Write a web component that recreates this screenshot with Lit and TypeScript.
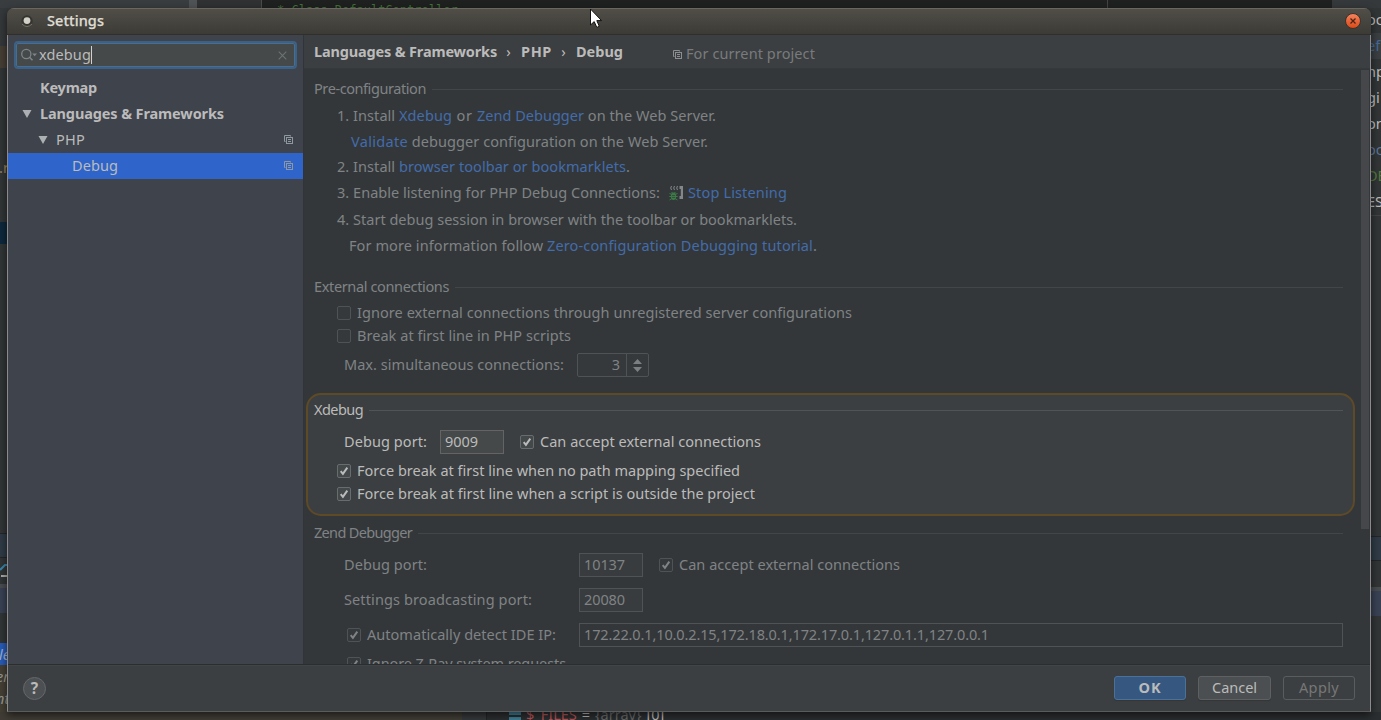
import { LitElement, html, css, nothing } from "lit";
import { customElement, property, state } from "lit/decorators.js";
import { styleMap } from "lit/directives/style-map.js";
import { classMap } from "lit/directives/class-map.js";

/** A run of text whose tracking is adjusted so that it fills a given width. */
@customElement("ui-text")
class UiText extends LitElement {
  static styles = css`
    :host { display: inline-block; white-space: pre; flex: none; padding-bottom: 2px; }
    .run { display: inline-block; }
  `;
  @property({ type: String }) text = "";
  @property({ type: Number }) width = 0;
  @state() private spacing = 0;

  firstUpdated() {
    const run = this.renderRoot.querySelector(".run") as HTMLElement;
    const natural = run.getBoundingClientRect().width;
    if (this.width && this.text.length) this.spacing = (this.width - natural) / this.text.length;
  }
  render() {
    return html`<span class="run" style=${styleMap({ letterSpacing: `${this.spacing}px` })}>${this.text}</span>`;
  }
}

const t = (text: string, width: number, cls = "") =>
  html`<ui-text class=${cls} .text=${text} .width=${width}></ui-text>`;

@customElement("ui-check")
class UiCheck extends LitElement {
  static styles = css`
    :host { display: flex; align-items: center; }
    .box {
      box-sizing: border-box; width: 14px; height: 14px; margin-right: 6px; flex: none;
      border: 1px solid var(--box-line, #505355); border-radius: 2px; background: var(--box-fill, #35393b);
    }
    .box svg { display: block; }
  `;
  @property({ type: Boolean }) checked = false;
  render() {
    return html`<span class="box">${this.checked
      ? html`<svg width="12" height="12" viewBox="0 0 12 12"><path d="M2.7 6.2L4.9 8.8L9.3 2.6" fill="none" stroke="currentColor" stroke-width="2"/></svg>`
      : nothing}</span><slot></slot>`;
  }
}

const copyIcon = html`<svg width="11" height="11" viewBox="0 0 11 11" fill="none" stroke="currentColor">
  <path d="M2.5 7.5H1.5V1.5H7.5V2.5"/><rect x="3.5" y="3.5" width="6" height="6"/><path d="M5 5.5H8M5 7.5H8"/>
</svg>`;

const arrow = html`<svg width="10" height="8" viewBox="0 0 10 8"><path d="M0.5 0H9.5L5 8Z" fill="#adb0b2"/></svg>`;

const listenIcon = html`<svg width="15" height="16" viewBox="0 0 15 16" fill="none">
  <path d="M2.5 1Q0.9 3 2.5 5M5.5 1Q3.9 3 5.5 5M8.5 1Q6.9 3 8.5 5" stroke="#85898b"/>
  <path d="M10.5 1H14V14H10.5V11H11.8V4H10.5Z" fill="#83878a"/>
  <ellipse cx="4.5" cy="11.3" rx="2.6" ry="3.7" fill="#3d7a47"/>
  <path d="M0.5 8.5L3 9.5M8.5 8.5L6 9.5M0.3 11.5H8.7M0.5 15L3 13.5M8.5 15L6 13.5M2.5 7L4 8.5M6.5 7L5 8.5" stroke="#3d7a47"/>
  <path d="M3 10.5H6M3 12.5H6" stroke="#2c4234" stroke-width=".7"/>
</svg>`;

@customElement("app-root")
class AppRoot extends LitElement {
  static styles = css`
    :host {
      display: block; position: relative; width: 1381px; height: 720px; overflow: hidden;
      background: #323536; color: #bbbbbb; font: 14.5px/20px "Noto Sans", "Open Sans", sans-serif;
    }
    .desk { display: flex; flex-direction: column; height: 720px; }
    .top { display: flex; height: 8px; overflow: hidden; font: 12px/16px "DejaVu Sans Mono", monospace; color: #457038; }
    .t1 { width: 189px; background: #3a3d3f; }
    .t2 { width: 8px; background: #505355; }
    .t3 { width: 64px; background: #2f3133; border-right: 1px solid #4b4b4b; }
    .t4 { width: 830px; padding: 2px 0 0 15px; white-space: pre; background: #1f2120; }
    .t5 { width: 224px; border-left: 1px solid #444; background: #1f2120; }
    .t6 { flex: 1; background: #36393b; }
    .sides { flex: 1; display: flex; justify-content: space-between; min-height: 0; overflow: hidden; }
    .side { width: 12px; display: flex; flex-direction: column; overflow: hidden; white-space: pre; line-height: 24px; }
    .side span { flex: none; box-sizing: border-box; }
    .l1 { height: 38px; background: #35383a; } .l2 { height: 22px; background: #453f35; }
    .l3 { height: 154px; padding-top: 87px; color: #9c815f; text-indent: -1px; } .l4 { height: 22px; background: #0e283c; }
    .l5 { height: 289px; } .l6 { height: 24px; background: #2f3b47; border-top: 1px solid #242628; }
    .l7 { height: 27px; border-top: 1px solid #242628; }
    .l8 { height: 4px; background: #4a4d50; } .l9 { height: 25px; background: #394154; } .l10 { height: 30px; }
    .l11 { height: 22px; line-height: 22px; background: #285bb8; color: #9fb0cf; font-style: italic; text-indent: -1px; }
    .l12 { height: 22px; line-height: 22px; background: #444036; color: #9a9a92; font-style: italic; text-indent: -4px; }
    .l13 { height: 38px; }
    .r1 { height: 25px; line-height: 22px; } .r2 { height: 26px; background: #3b3f42; color: #446a98; }
    .r1, .r2, .r { text-indent: -2px; }
    .r { height: 26px; } .blue { color: #5a7596; } .green { color: #537940; }
    .r3 { height: 321px; border-top: 1px solid #444; }
    .bottom { display: flex; height: 8px; overflow: hidden; background: #2b2e30; }
    .b1 { width: 462px; background: #413d36; }
    .b2 { width: 24px; background: #35383a; border-right: 1px solid #232526; }
    .files { display: flex; height: 8px; padding-left: 22px; line-height: 4px; gap: 5px; }
    .bars { width: 12px; background: repeating-linear-gradient(#3f7f96 0 3px, #2b2e30 3px 5px); }
    .red { color: #b75557; } .grey { color: #686b6c; }

    .window {
      position: absolute; left: 7px; top: 8px; width: 1364px; height: 704px; box-sizing: border-box;
      display: flex; flex-direction: column; border-radius: 7px 7px 0 0; overflow: hidden;
      background: #3c3f41;
    }
    .shadow {
      position: absolute; left: 7px; top: 8px; width: 1364px; height: 704px; border-radius: 7px 7px 0 0;
      box-shadow: 0 3px 9px rgba(0, 0, 0, .6);
    }
    .titlebar {
      box-sizing: border-box; height: 27px; flex: none; display: flex; align-items: center; padding: 0 10px 0 14px;
      background: linear-gradient(#504e47, #3d3b36); border-top: 1px solid #69675f; border-bottom: 1px solid #302f2c;
      color: #dfdbd2; font-weight: 500;
    }
    .titlebar ui-text { margin-left: 14px; padding-bottom: 3px; flex: 1; -webkit-text-stroke: .25px #dfdbd2; }
    .titlebar svg { flex: none; margin-bottom: 1px; }
    .frame {
      flex: 1; min-height: 0; display: flex; flex-direction: column;
      border: solid #8b8b8b; border-width: 0 1px 1px; border-bottom-color: #5a5b5b;
    }
    .body { flex: 1; display: flex; min-height: 0; border-bottom: 1px solid #2b2d2e; }
    .sidebar { width: 295px; flex: none; background: #3f434c; border-right: 1px solid #313537; }
    .search {
      box-sizing: border-box; height: 28px; margin: 6px 6px 6px; padding: 0 8px 0 5px; display: flex; align-items: center;
      border: 2px solid #3d6185; outline: 1px solid #466d94; outline-offset: -3px; border-radius: 4px; background: #45494a;
    }
    .search ui-text { margin-left: 1px; }
    .caret { width: 1px; height: 18px; background: #d0d0d0; }
    .spring { flex: 1; }
    .node { height: 26px; display: flex; align-items: center; padding-right: 9px; }
    .node svg { flex: none; }
    .node .copy { margin: 0 0 1px auto; height: 11px; color: #8f979f; display: flex; }
    .bold { font-weight: 700; }
    .n0 { padding-left: 32px; } .n1 { padding-left: 14px; gap: 8px; } .n2 { padding-left: 30px; gap: 8px; } .n3 { padding-left: 64px; }
    .selected { background: #2f65ca; }
    .page { flex: 1; min-width: 0; display: flex; flex-direction: column; }
    .crumbs {
      height: 34px; box-sizing: border-box; flex: none; display: flex; align-items: center; padding-left: 10px;
      border-bottom: 1px solid #36393b; background: #3c3f41;
    }
    .scope { display: flex; align-items: center; gap: 3px; margin-left: 49px; padding-top: 5px; color: #787b7d; }
    .scope svg { color: #8b8f92; }
    .crumbs .sep { font-weight: 400; }
    .scroll { flex: 1; min-height: 0; display: flex; background: #33373a; }
    .content { flex: 1; min-width: 0; overflow: hidden; padding: 10px 6px 0 2px; color: #808385; }
    .bar { width: 8px; height: 459px; margin: 1px 1px 0 0; background: #46474a; }
    .head { display: flex; align-items: center; height: 20px; margin: 0 12px 0 8px; }
    .head::after { content: ""; flex: 1; height: 1px; margin-left: 6px; background: #434648; }
    .row { display: flex; align-items: center; padding-left: 31px; }
    .h23 { height: 23px; } .h24 { height: 24px; } .h25 { height: 25px; } .h26 { height: 26px; } .h28 { height: 28px; }
    .in45 { padding-left: 45px; } .in43 { padding-left: 43px; } .in38 { padding-left: 38px; } .in41 { padding-left: 41px; }
    .link { color: #436cab; }
    .steps { margin: 4px 0 18px; }
    .listen { display: flex; align-items: center; gap: 4px; margin-left: 9px; padding-bottom: 1px; }
    .ext { margin: 4px 0 6px; }
    .spinner {
      box-sizing: border-box; width: 72px; height: 24px; margin-left: 13px; display: flex;
      border: 1px solid #505355; border-radius: 2px; background: #35393b;
    }
    .value { width: 49px; box-sizing: border-box; padding-right: 6px; line-height: 21px; text-align: right; border-right: 1px solid #505355; }
    .spinner svg { margin: 5px 0 0 6px; }
    .card {
      box-sizing: border-box; height: 123px; margin: 16px 7px 7px 0; padding-top: 5px; width: 1049px;
      border: 2px solid #5f4a27; border-radius: 15px; background: #3c3f41; color: #bbbbbb;
      --box-line: #696c6d; --box-fill: #43494a;
    }
    .card .head { margin: 0 10px 10px 6px; }
    .card .head::after { background: #515456; }
    .card .row { padding-left: 29px; }
    .card .port { padding-left: 36px; margin-bottom: 5px; }
    .field {
      box-sizing: border-box; height: 24px; width: 64px; padding-left: 4px; display: flex; align-items: center;
      border: 1px solid #505355; background: #383c3e;
    }
    .card .field { border-color: #646464; background: #45494a; margin-left: 13px; }
    .port ui-check, .zport ui-check { margin-left: 16px; }
    .label { width: 235px; flex: none; }
    .auto .label { width: 232px; }
    .z { margin-bottom: 11px; }
    .auto { margin-bottom: 5px; }
    .field.wide { width: 764px; background: #33373a; }
    .zend { margin-bottom: 10px; }
    .footer { height: 46px; flex: none; display: flex; align-items: center; gap: 12px; padding: 0 15px 1px; border-top: 1px solid #424547; box-sizing: border-box; }
    .help {
      width: 23px; height: 23px; box-sizing: border-box; border: 1px solid #65686a; border-radius: 50%; background: #4c5052;
      margin-top: 1px; text-align: center; font-weight: 700; line-height: 21px; font-size: 15.5px;
    }
    .btn {
      width: 72px; height: 24px; box-sizing: border-box; border: 1px solid #5e6162; border-radius: 3px; background: #4b4f51;
      display: flex; align-items: center; justify-content: center; box-shadow: 0 1px 1px #333638;
    }
    .ok { border-color: #4a7199; background: #365880; font-weight: 700; }
    .cancel { width: 73px; }
    .apply { background: none; color: #777; box-shadow: none; border-color: #5a5d5e; }
    .pointer { position: absolute; left: 589px; top: 8px; }
  `;

  private node(level: string, text: string, width: number, opts: { arrow?: boolean; copy?: boolean; bold?: boolean; selected?: boolean }) {
    return html`<div class=${classMap({ node: true, [level]: true, selected: !!opts.selected, bold: !!opts.bold })}>
      ${opts.arrow ? arrow : nothing}${t(text, width)}${opts.copy ? html`<span class="copy">${copyIcon}</span>` : nothing}
    </div>`;
  }

  render() {
    return html`
      <div class="desk">
        <div class="top"><span class="t1"></span><span class="t2"></span><span class="t3"></span><span class="t4">* Class DefaultController</span><span class="t5"></span><span class="t6"></span></div>
        <div class="sides">
          <div class="side">
            <span class="l1"></span><span class="l2"></span><span class="l3">.r</span><span class="l4"></span><span class="l5"></span><span class="l6"></span>
            <span class="l7"><svg width="8" height="20" viewBox="0 0 8 20"><path d="M0 12L5 7H8" stroke="#3a86ab" stroke-width="2" fill="none"/><path d="M1 18H8" stroke="#aaa" stroke-width="2"/></svg></span>
            <span class="l8"></span><span class="l9"></span><span class="l10"></span><span class="l11">le</span><span class="l12">er</span><span class="l12 l13">nt</span>
          </div>
          <div class="side">
            <span class="r1">oc</span><span class="r2">ef</span><span class="r">np</span><span class="r">gi</span><span class="r">om</span><span class="r blue">oc</span><span class="r green">DE</span><span class="r">ES</span>
            <span class="r3"></span><span class="l6"></span><span class="l7"></span><span class="l8"></span><span class="l9"></span>
          </div>
        </div>
        <div class="bottom"><span class="b1"></span><span class="b2"></span>
          <span class="files"><span class="bars"></span><span class="red">$_FILES</span><span>=</span><span class="grey">{array}</span><span>[0]</span></span></div>
      </div>
      <div class="shadow"></div>
      <div class="window">
        <div class="titlebar">
          <svg width="12" height="14" viewBox="0 0 12 14"><circle cx="6" cy="7" r="5.7" fill="#35342f"/><path d="M1 10Q6 15 11 10" stroke="#77756d" fill="none"/><circle cx="6" cy="6.6" r="3.4" fill="#d2d0c9"/></svg>
          ${t("Settings", 57)}
          <svg width="16" height="16" viewBox="0 0 16 16"><defs><linearGradient id="g" x1="0" y1="0" x2="0" y2="1"><stop offset="0" stop-color="#f58460"/><stop offset="1" stop-color="#dd4814"/></linearGradient></defs><circle cx="8" cy="8" r="7.5" fill="url(#g)" stroke="#34332f"/><path d="M5.5 5.5L10.5 10.5M10.5 5.5L5.5 10.5" stroke="#4b2418" stroke-width="1.3"/></svg>
        </div>
        <div class="frame">
          <div class="body">
            <div class="sidebar">
              <div class="search">
                <svg width="17" height="14" viewBox="0 0 17 14" fill="none" stroke="#7d8588"><circle cx="5.3" cy="6" r="4.6" stroke-width="1.3"/><path d="M8.5 9.2L11.5 12.2" stroke-width="1.6"/><path d="M11.2 5.5H16L13.6 8.2Z" fill="#7d8588" stroke="none"/></svg>
                ${t("xdebug", 52)}<span class="caret"></span><span class="spring"></span>
                <svg width="9" height="9" viewBox="0 0 9 9"><path d="M.7 .7L8.3 8.3M8.3 .7L.7 8.3" stroke="#6d7274" stroke-width="1.1"/></svg>
              </div>
              ${this.node("n0", "Keymap", 57, { bold: true })}
              ${this.node("n1", "Languages & Frameworks", 184, { arrow: true, bold: true })}
              ${this.node("n2", "PHP", 29, { arrow: true, copy: true })}
              ${this.node("n3", "Debug", 46, { copy: true, selected: true })}
            </div>
            <div class="page">
              <div class="crumbs">
                <span class="bold">${t("Languages & Frameworks", 183)}${t("  ›  ", 24, "sep")}${t("PHP", 31)}${t("  ›  ", 24, "sep")}${t("Debug", 47)}</span>
                <span class="scope">${copyIcon}${t("For current project", 129)}</span>
              </div>
              <div class="scroll">
                <div class="content">
                  <div class="head">${t("Pre-configuration", 112)}</div>
                  <div class="steps">
                    <div class="row h26">${t("1. Install ", 62)}${t("Xdebug", 53, "link")}${t(" or ", 25)}${t("Zend Debugger", 107, "link")}${t(" on the Web Server.", 132)}</div>
                    <div class="row h26 in45">${t("Validate", 57, "link")}${t(" debugger configuration on the Web Server.", 300)}</div>
                    <div class="row h24">${t("2. Install ", 62)}${t("browser toolbar or bookmarklets", 227, "link")}${t(".", 4)}</div>
                    <div class="row h28">${t("3. Enable listening for PHP Debug Connections:", 323)}<span class="listen">${listenIcon}${t("Stop Listening", 99, "link")}</span></div>
                    <div class="row h26">${t("4. Start debug session in browser with the toolbar or bookmarklets.", 460)}</div>
                    <div class="row h26 in43">${t("For more information follow ", 198)}${t("Zero-configuration Debugging tutorial", 266, "link")}${t(".", 4)}</div>
                  </div>
                  <div class="head">${t("External connections", 135)}</div>
                  <div class="ext">
                    <div class="row h23"><ui-check>${t("Ignore external connections through unregistered server configurations", 495)}</ui-check></div>
                    <div class="row h23"><ui-check>${t("Break at first line in PHP scripts", 214)}</ui-check></div>
                  </div>
                  <div class="row h24 in38">${t("Max. simultaneous connections:", 220)}
                    <span class="spinner"><span class="value">3</span><svg width="9" height="13" viewBox="0 0 9 13"><path d="M0 5L4.5 0L9 5ZM0 8H9L4.5 13Z" fill="#7d8082"/></svg></span>
                  </div>
                  <div class="card">
                    <div class="head">${t("Xdebug", 49)}</div>
                    <div class="row h24 port">${t("Debug port:", 83)}<span class="field">${t("9009", 33)}</span><ui-check checked>${t("Can accept external connections", 221)}</ui-check></div>
                    <div class="row h23"><ui-check checked>${t("Force break at first line when no path mapping specified", 383)}</ui-check></div>
                    <div class="row h23"><ui-check checked>${t("Force break at first line when a script is outside the project", 398)}</ui-check></div>
                  </div>
                  <div class="head zend">${t("Zend Debugger", 98)}</div>
                  <div class="row h24 in38 z zport"><span class="label">${t("Debug port:", 83)}</span><span class="field">${t("10137", 41)}</span><ui-check checked>${t("Can accept external connections", 221)}</ui-check></div>
                  <div class="row h24 in38 z"><span class="label">${t("Settings broadcasting port:", 188)}</span><span class="field">${t("20080", 41)}</span></div>
                  <div class="row h24 in41 auto"><ui-check checked class="label">${t("Automatically detect IDE IP:", 189)}</ui-check><span class="field wide">${t("172.22.0.1,10.0.2.15,172.18.0.1,172.17.0.1,127.0.1.1,127.0.0.1", 405)}</span></div>
                  <div class="row h23 in41"><ui-check checked>${t("Ignore Z-Ray system requests", 199)}</ui-check></div>
                </div>
                <div class="bar"></div>
              </div>
            </div>
          </div>
          <div class="footer">
            <span class="help">?</span><span class="spring"></span>
            <span class="btn ok">${t("OK", 23)}</span><span class="btn cancel">${t("Cancel", 45)}</span><span class="btn apply">${t("Apply", 40)}</span>
          </div>
        </div>
      </div>
      <svg class="pointer" width="14" height="22" viewBox="0 0 14 22"><path d="M1.5 1V17L5.2 13.6L7.8 19.4L10.3 18.3L7.8 12.6H12.6Z" fill="#fff" stroke="#111"/></svg>
    `;
  }
}
